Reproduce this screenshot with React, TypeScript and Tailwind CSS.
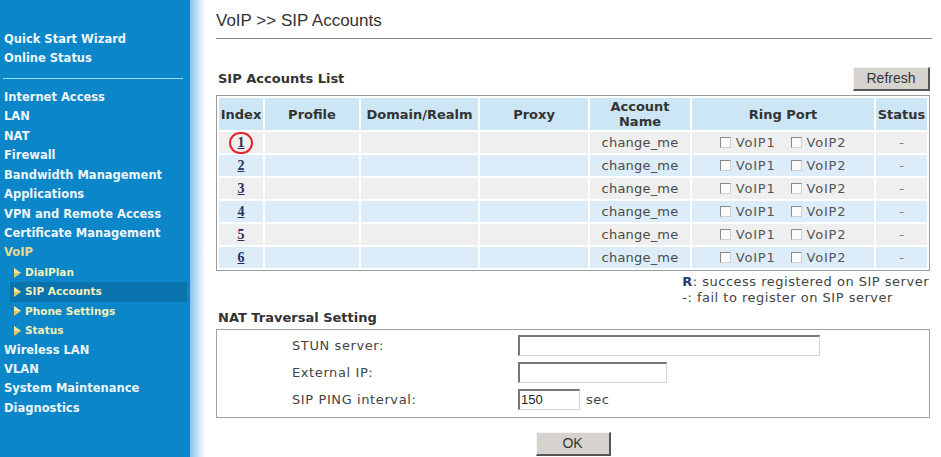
import React from "react";

const mainItems1 = ["Quick Start Wizard", "Online Status"];
const mainItems2 = [
  "Internet Access",
  "LAN",
  "NAT",
  "Firewall",
  "Bandwidth Management",
  "Applications",
  "VPN and Remote Access",
  "Certificate Management",
];
const subItems = ["DialPlan", "SIP Accounts", "Phone Settings", "Status"];
const mainItems3 = ["Wireless LAN", "VLAN", "System Maintenance", "Diagnostics"];

function Tri() {
  return (
    <svg width="7" height="10" viewBox="0 0 7 10" className="shrink-0">
      <polygon points="0,0 7,5 0,10" fill="#d9c86e" />
      <polygon points="0,0 7,5 0,5" fill="#f2e6a0" />
    </svg>
  );
}

function Check() {
  return (
    <span className="inline-block w-[11px] h-[11px] bg-[#fbfbfb] border-t border-l border-t-[#8a8a8a] border-l-[#8a8a8a] border-r border-b border-r-[#d0d0d0] border-b-[#d0d0d0]" />
  );
}

function Btn({ label, w }: { label: string; w: string }) {
  return (
    <div
      className={`${w} h-[24px] flex items-center justify-center bg-[#d6d3ce] border-t border-l border-t-[#f4f4f4] border-l-[#f4f4f4] border-r-2 border-b-2 border-r-[#555] border-b-[#555] font-['Liberation_Sans',sans-serif] text-[14px] text-[#333]`}
    >
      {label}
    </div>
  );
}

export default function App() {
  const rows = [1, 2, 3, 4, 5, 6];
  return (
    <div className="flex w-[941px] h-[457px] bg-white overflow-hidden font-['DejaVu_Sans',sans-serif]">
      <aside className="w-[190px] shrink-0 bg-[#0b86c8] pt-[30px] text-[11.5px] font-bold text-[#eef5f9]">
        {mainItems1.map((t) => (
          <div key={t} className="h-[19.44px] leading-[19.44px] pl-[4px] whitespace-nowrap">
            {t}
          </div>
        ))}
        <div className="mt-[9px] mb-[9px] ml-[3px] w-[180px] h-px bg-[#9fdcf2]" />
        {mainItems2.map((t) => (
          <div key={t} className="h-[19.44px] leading-[19.44px] pl-[4px] whitespace-nowrap">
            {t}
          </div>
        ))}
        <div className="h-[19.44px] leading-[19.44px] pl-[4px] text-[#e6da92]">VoIP</div>
        {subItems.map((t) => (
          <div
            key={t}
            className={`h-[19.44px] flex items-center gap-[4px] ml-[10px] mr-[3px] pl-[4px] text-[10.5px] text-[#f4f0b8] whitespace-nowrap ${
              t === "SIP Accounts" ? "bg-[#0a72ad]" : ""
            }`}
          >
            <Tri />
            <span>{t}</span>
          </div>
        ))}
        {mainItems3.map((t) => (
          <div key={t} className="h-[19.44px] leading-[19.44px] pl-[4px] whitespace-nowrap">
            {t}
          </div>
        ))}
      </aside>
      <div className="w-[15px] shrink-0 bg-linear-to-r from-[#86c4ea] to-white" />
      <main className="flex-1 pl-[11px] pr-[9px]">
        <div className="pt-[11px] h-[30px] leading-[20px] font-['Liberation_Sans',sans-serif] text-[17px] text-[#333]">
          VoIP &gt;&gt; SIP Accounts
        </div>
        <div className="mt-[8px] w-[716px] border-t border-[#8a8a8a]" />
        <div className="mt-[28px] w-[714px] flex items-center justify-between">
          <div className="pl-[2px] text-[13px] font-bold text-[#333] leading-[16px]">SIP Accounts List</div>
          <Btn label="Refresh" w="w-[77px]" />
        </div>
        <table className="mt-[4px] w-[714px] table-fixed border-separate border-spacing-[2px] border border-[#9c9c9c] text-[13px]">
          <thead>
            <tr className="h-[32px] text-[#333] font-bold leading-[15px]">
              <th className="w-[44px] p-0 bg-[#cde6f6]">Index</th>
              <th className="w-[94px] p-0 bg-[#cde6f6]">Profile</th>
              <th className="w-[117px] p-0 bg-[#cde6f6]">Domain/Realm</th>
              <th className="w-[108px] p-0 bg-[#cde6f6]">Proxy</th>
              <th className="w-[100px] p-0 bg-[#cde6f6]">
                Account
                <br />
                Name
              </th>
              <th className="w-[182px] p-0 bg-[#cde6f6]">Ring Port</th>
              <th className="w-[51px] p-0 bg-[#cde6f6]">Status</th>
            </tr>
          </thead>
          <tbody>
            {rows.map((n) => {
              const bg = n % 2 === 1 ? "bg-[#efefef]" : "bg-[#dcedf9]";
              return (
                <tr key={n} className="h-[21px] text-[#4a4a4a]">
                  <td className={`${bg} p-0 text-center`}>
                    <span className="relative inline-block font-['Liberation_Serif',serif] font-bold text-[14px] leading-[16px] underline text-[#2c2c58]">
                      {n}
                      {n === 1 && (
                        <span className="absolute left-1/2 top-1/2 -translate-x-1/2 -translate-y-1/2 w-[24px] h-[22px] rounded-full border-2 border-[#e3262e]" />
                      )}
                    </span>
                  </td>
                  <td className={`${bg} p-0`} />
                  <td className={`${bg} p-0`} />
                  <td className={`${bg} p-0`} />
                  <td className={`${bg} p-0 text-center tracking-[0.2px]`}>change_me</td>
                  <td className={`${bg} p-0`}>
                    <div className="flex items-center justify-center gap-[5px] text-[#555] tracking-[0.8px]">
                      <Check />
                      <span>VoIP1</span>
                      <span className="w-[5px]" />
                      <Check />
                      <span>VoIP2</span>
                    </div>
                  </td>
                  <td className={`${bg} p-0 text-center text-[#777]`}>-</td>
                </tr>
              );
            })}
          </tbody>
        </table>
        <div className="mt-[3px] w-[714px] flex justify-end text-[13px] leading-[16px] text-[#444] tracking-[0.5px]">
          <div className="pr-[1px]">
            <div>
              <span className="font-bold text-[#2a3a7a]">R</span>: success registered on SIP server
            </div>
            <div>-: fail to register on SIP server</div>
          </div>
        </div>
        <div className="mt-[4px] pl-[2px] text-[13px] font-bold text-[#333] leading-[16px]">NAT Traversal Setting</div>
        <div className="mt-[3px] w-[714px] border border-[#a0a0a0] pt-[5px] pb-[7px] flex flex-col gap-[6px] text-[13px] text-[#444]">
          {[
            { label: "STUN server:", w: "w-[302px]", v: "" },
            { label: "External IP:", w: "w-[149px]", v: "" },
            { label: "SIP PING interval:", w: "w-[62px]", v: "150" },
          ].map((r) => (
            <div key={r.label} className="flex items-center h-[21px]">
              <div className="w-[301px] pl-[75px] tracking-[0.6px]">{r.label}</div>
              <div
                className={`${r.w} h-[21px] bg-white border-t-2 border-l-2 border-t-[#777] border-l-[#777] border-r border-b border-r-[#d4d4d4] border-b-[#d4d4d4] pl-[1px] font-['Liberation_Sans',sans-serif] text-[13px] leading-[18px] text-[#222]`}
              >
                {r.v}
              </div>
              {r.v && <span className="ml-[6px] text-[#444] tracking-[0.5px]">sec</span>}
            </div>
          ))}
        </div>
        <div className="mt-[14px] w-[714px] flex justify-center">
          <Btn label="OK" w="w-[75px]" />
        </div>
      </main>
    </div>
  );
}
